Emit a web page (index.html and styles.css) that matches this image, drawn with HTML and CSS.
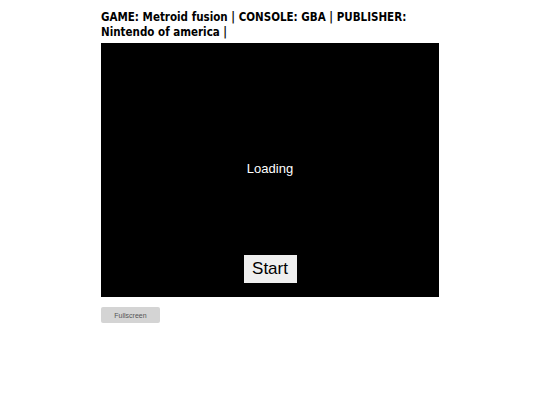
FILE: index.html
```html
<!DOCTYPE html>
<html>
<head>
<meta charset="utf-8">
<link rel="stylesheet" href="styles.css">
</head>
<body>
<div class="wrap">
  <h1 class="title">GAME: Metroid fusion | CONSOLE: GBA | PUBLISHER: Nintendo of america |</h1>
  <div class="screen">
    <div class="loading">Loading</div>
    <button class="start">Start</button>
  </div>
  <button class="fs">Fullscreen</button>
</div>
</body>
</html>
```

FILE: styles.css
```css
html, body { margin: 0; padding: 0; background: #fff; }
.wrap {
  width: 338px;
  margin: 0 auto;
  padding-top: 10px;
  display: flex;
  flex-direction: column;
  align-items: flex-start;
}
.title {
  font-family: "DejaVu Sans Condensed", "DejaVu Sans", Verdana, sans-serif;
  font-stretch: condensed;
  font-weight: bold;
  font-size: 11.5px;
  line-height: 15px;
  margin: 0 0 3px 0;
  color: #000;
}
.screen {
  width: 338px;
  height: 254px;
  background: #000;
  display: flex;
  flex-direction: column;
  align-items: center;
}
.loading {
  margin-top: 118px;
  color: #fff;
  font-family: "Liberation Sans", Arial, sans-serif;
  font-size: 13px;
  line-height: 15px;
}
.start {
  margin-top: 79px;
  width: 53px;
  height: 28px;
  padding: 0;
  border: none;
  background: #efefef;
  color: #000;
  font-family: "Liberation Sans", Arial, sans-serif;
  font-size: 17px;
}
.fs {
  margin-top: 10px;
  width: 59px;
  height: 16px;
  padding: 0;
  border: none;
  border-radius: 2px;
  background: #d4d4d4;
  color: #555;
  font-family: "Liberation Sans", Arial, sans-serif;
  font-size: 7px;
}
```
